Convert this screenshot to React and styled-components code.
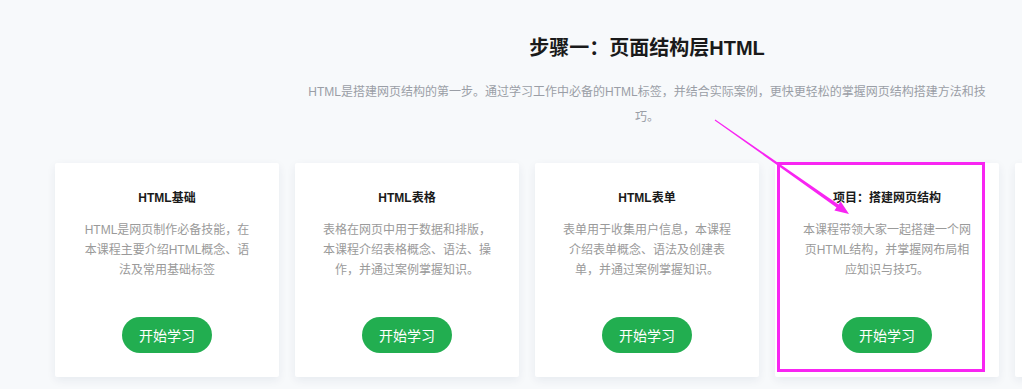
import React from 'react'
import styled, { createGlobalStyle } from 'styled-components'

const courses = [
  {
    title: 'HTML基础',
    desc: 'HTML是网页制作必备技能，在本课程主要介绍HTML概念、语法及常用基础标签',
  },
  {
    title: 'HTML表格',
    desc: '表格在网页中用于数据和排版，本课程介绍表格概念、语法、操作，并通过案例掌握知识。',
  },
  {
    title: 'HTML表单',
    desc: '表单用于收集用户信息，本课程介绍表单概念、语法及创建表单，并通过案例掌握知识。',
  },
  {
    title: '项目：搭建网页结构',
    desc: '本课程带领大家一起搭建一个网页HTML结构，并掌握网布局相应知识与技巧。',
    highlight: true,
  },
]

export default function App() {
  return (
    <Page>
      <GlobalStyle />
      <Container>
        <Title>步骤一：页面结构层HTML</Title>
        <Subtitle>
          HTML是搭建网页结构的第一步。通过学习工作中必备的HTML标签，并结合实际案例，更快更轻松的掌握网页结构搭建方法和技巧。
        </Subtitle>
        <CardRow>
          {courses.map((course, idx) => (
            <Card key={idx}>
              {course.highlight && <Highlight />}
              <CardTitle>{course.title}</CardTitle>
              <CardDesc>{course.desc}</CardDesc>
              <StartButton>开始学习</StartButton>
            </Card>
          ))}
          {/* next card, only its edge shows in the viewport */}
          <Card />
        </CardRow>
      </Container>
      <Arrow viewBox="0 0 1022 389" width="1022" height="389">
        <polygon
          points="714.7,120.4 836.5,207.4 834.4,210.5 849,214 840.7,201.5 838.5,204.6 715.3,119.6"
          fill="#F825F2"
        />
      </Arrow>
    </Page>
  )
}

const GlobalStyle = createGlobalStyle`
  body {
    margin: 0;
    background: #F7F9FB;
    font-family: "Liberation Sans", "Noto Sans CJK SC", sans-serif;
    overflow: hidden;
  }
`;

const Page = styled.div`
  position: relative;
  width: 1022px;
  height: 389px;
  overflow: hidden;
  background: #F7F9FB;
`;

const Container = styled.div`
  width: 1184px;
  margin-left: 55px;
  padding-top: 34px;
  display: flex;
  flex-direction: column;
  align-items: center;
`;

const Title = styled.h2`
  margin: 0;
  font-size: 20px;
  line-height: 28px;
  font-weight: bold;
  color: #1a1a1a;
`;

const Subtitle = styled.p`
  margin: 18px 0 0;
  max-width: 684px;
  font-size: 12px;
  line-height: 25px;
  color: #9a9ea6;
  text-align: center;
`;

const CardRow = styled.div`
  margin-top: 33px;
  display: flex;
  gap: 16px;
  align-self: stretch;
`;

const Card = styled.div`
  position: relative;
  flex: 0 0 224px;
  height: 214px;
  box-sizing: border-box;
  padding: 25px 28px 24px;
  background: #fff;
  border-radius: 2px;
  box-shadow: 0 3px 10px rgba(20, 40, 80, 0.07);
  display: flex;
  flex-direction: column;
  align-items: center;
`;

const Highlight = styled.div`
  position: absolute;
  top: -1px;
  left: 2px;
  right: 14px;
  bottom: 5px;
  border: 3px solid #F825F2;
  pointer-events: none;
`;

const CardTitle = styled.h4`
  margin: 0;
  font-size: 12px;
  line-height: 20px;
  font-weight: bold;
  color: #1a1a1a;
`;

const CardDesc = styled.p`
  margin: 12px 0 0;
  width: 168px;
  font-size: 12px;
  line-height: 20px;
  color: #9a9a9a;
  text-align: center;
`;

const StartButton = styled.button`
  margin-top: auto;
  width: 90px;
  height: 36px;
  border: none;
  border-radius: 18px;
  background: #22AE50;
  color: #fff;
  font-family: inherit;
  font-size: 14px;
  cursor: pointer;
`;

const Arrow = styled.svg`
  position: absolute;
  top: 0;
  left: 0;
  pointer-events: none;
`;
